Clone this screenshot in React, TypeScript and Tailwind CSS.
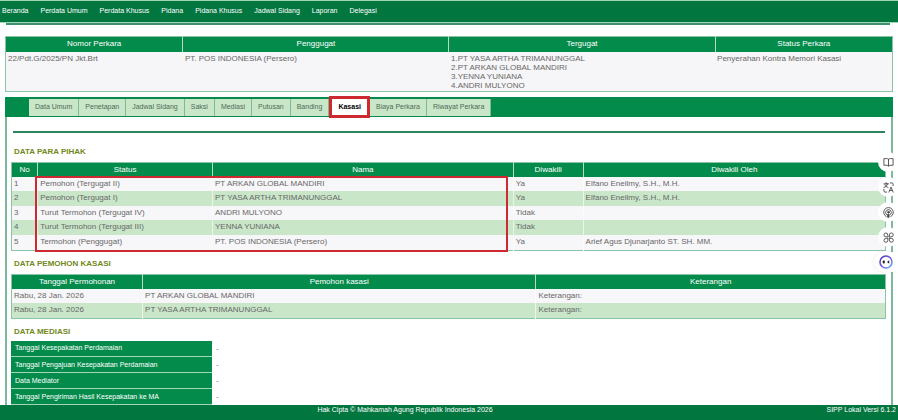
import React from "react";

const menus = [
  "Beranda",
  "Perdata Umum",
  "Perdata Khusus",
  "Pidana",
  "Pidana Khusus",
  "Jadwal Sidang",
  "Laporan",
  "Delegasi",
];

const tabs = [
  "Data Umum",
  "Penetapan",
  "Jadwal Sidang",
  "Saksi",
  "Mediasi",
  "Putusan",
  "Banding",
  "Kasasi",
  "Biaya Perkara",
  "Riwayat Perkara",
];

const tergugat = [
  "1.PT YASA ARTHA TRIMANUNGGAL",
  "2.PT ARKAN GLOBAL MANDIRI",
  "3.YENNA YUNIANA",
  "4.ANDRI MULYONO",
];

const pihak = [
  { no: 1, status: "Pemohon (Tergugat II)", nama: "PT ARKAN GLOBAL MANDIRI", diwakili: "Ya", oleh: "Elfano Eneilmy, S.H., M.H." },
  { no: 2, status: "Pemohon (Tergugat I)", nama: "PT YASA ARTHA TRIMANUNGGAL", diwakili: "Ya", oleh: "Elfano Eneilmy, S.H., M.H." },
  { no: 3, status: "Turut Termohon (Tergugat IV)", nama: "ANDRI MULYONO", diwakili: "Tidak", oleh: "" },
  { no: 4, status: "Turut Termohon (Tergugat III)", nama: "YENNA YUNIANA", diwakili: "Tidak", oleh: "" },
  { no: 5, status: "Termohon (Penggugat)", nama: "PT. POS INDONESIA (Persero)", diwakili: "Ya", oleh: "Arief Agus Djunarjanto ST. SH. MM." },
];

const pemohon = [
  { tanggal: "Rabu, 28 Jan. 2026", nama: "PT ARKAN GLOBAL MANDIRI" },
  { tanggal: "Rabu, 28 Jan. 2026", nama: "PT YASA ARTHA TRIMANUNGGAL" },
];

const mediasi = [
  "Tanggal Kesepakatan Perdamaian",
  "Tanggal Pengajuan Kesepakatan Perdamaian",
  "Data Mediator",
  "Tanggal Pengiriman Hasil Kesepakatan ke MA",
];

const Th = ({ children, className = "" }: { children: React.ReactNode; className?: string }) => (
  <th
    scope="col"
    className={`border-l border-[#b5dcc4] first:border-l-0 bg-[#038b4b] p-0 font-normal text-white ${className}`}
  >
    {children}
  </th>
);

const Td = ({ children }: { children?: React.ReactNode }) => (
  <td className="border-l border-white/60 first:border-l-0 px-[2px] py-0 align-top">{children}</td>
);

const Title = ({ children }: { children: React.ReactNode }) => (
  <h2 className="px-[3px] text-[8px] leading-[10px] font-bold text-[#71891a]">{children}</h2>
);

const iconProps = {
  viewBox: "0 0 24 24",
  fill: "none",
  stroke: "#4a4a4a",
  strokeWidth: 2,
  strokeLinecap: "round" as const,
  strokeLinejoin: "round" as const,
  className: "h-[11px] w-[11px]",
};

const tools = [
  {
    label: "Baca",
    icon: (
      <svg {...iconProps}>
        <path d="M12 5v15M12 5c-1-1-2-1.5-4-1.5H2V18h6.5c1.5 0 2.5.5 3.5 2 1-1.5 2-2 3.5-2H22V3.5h-6c-2 0-3 .5-4 1.5z" />
      </svg>
    ),
  },
  {
    label: "Terjemahkan",
    icon: (
      <svg {...iconProps}>
        <path d="M2 4h10M7 1.5V4M10 4c-1 4-4 7-8 8M4 6c1 3 4 5 7 6" />
        <path d="M13 22l4.5-11L22 22M14.5 18.500h6" />
        <path d="M16 2h3.5c1.5 0 2.5 1 2.5 2.5V8M2 16v3.5C2 21 3 22 4.5 22H8" />
      </svg>
    ),
  },
  {
    label: "Dengarkan",
    icon: (
      <svg {...iconProps}>
        <path d="M7 21a10.500 10.500 0 1 1 10 0" />
        <path d="M7.500 16.500a6.300 6.300 0 1 1 9 0" />
        <circle cx="12" cy="11.5" r="2" fill="#4a4a4a" />
        <path d="M10.500 16.500h3l-.5 6h-2z" fill="#4a4a4a" />
      </svg>
    ),
  },
  {
    label: "Aplikasi",
    icon: (
      <svg {...iconProps}>
        <path d="M10.500 10.500H6.300a4.200 4.200 0 1 1 4.200-4.200z" />
        <path d="M14 10.500V6.300a4.200 4.200 0 1 1 4.200 4.200z" />
        <path d="M10.500 14v4.200a4.200 4.200 0 1 1-4.200-4.200z" />
        <path d="M14 14h4.200a4.200 4.200 0 1 1-4.200 4.200z" />
      </svg>
    ),
  },
];

const SideTools = () => (
  <div className="absolute top-[152px] right-0 flex flex-col items-end gap-[5px]">
    {tools.map((tool) => (
      <button
        key={tool.label}
        type="button"
        aria-label={tool.label}
        className="flex h-5 w-5 items-center justify-center rounded-full bg-white"
      >
        {tool.icon}
      </button>
    ))}
    <button
      type="button"
      aria-label="Asisten"
      className="flex h-5 w-6 items-center justify-center rounded-l-full bg-white shadow-[-1px_0_4px_rgba(0,0,0,0.06)]"
    >
      <svg viewBox="0 0 28 28" className="h-[14px] w-[14px]">
        <defs>
          <linearGradient id="ring" x1="0" y1="0" x2="1" y2="1">
            <stop offset="0" stopColor="#4a35b8" />
            <stop offset="0.5" stopColor="#7a58e6" />
            <stop offset="1" stopColor="#58b8f0" />
          </linearGradient>
        </defs>
        <circle cx="14" cy="14" r="12" fill="#fff" stroke="url(#ring)" strokeWidth="3.2" />
        <rect x="7.5" y="11" width="4" height="6" rx="1.5" fill="#222" />
        <path d="M20.5 10.5L16 14l4.5 3.5z" fill="#222" />
      </svg>
    </button>
  </div>
);

const App = () => {
  return (
    <div className="relative flex min-h-screen flex-col bg-white font-['Liberation_Sans',Arial,sans-serif] text-[8px] leading-[14px] text-[#686868]">
      <nav className="flex h-[23px] items-center gap-3 border-y border-[#9fd6b8] bg-[#02763f] px-[2px] pb-[2px] text-[7px] text-white">
        {menus.map((menu) => (
          <a key={menu} href="#" className="whitespace-nowrap">
            {menu}
          </a>
        ))}
      </nav>

      <main className="flex flex-1 flex-col px-[5px]">
        <hr className="mr-[3px] ml-px border-t-2 border-[#3f8f6c]" />

        <table className="mt-[11px] w-full table-fixed border-collapse border border-[#8cc4a8]">
          <thead>
            <tr className="h-[15px]">
              <Th className="w-[20%]">Nomor Perkara</Th>
              <Th className="w-[30%]">Penggugat</Th>
              <Th className="w-[30%]">Tergugat</Th>
              <Th className="w-[20%]">Status Perkara</Th>
            </tr>
          </thead>
          <tbody>
            <tr className="bg-[#f6f5f7] leading-[9px]">
              <td className="px-[2px] pt-[2px] pb-px align-top">22/Pdt.G/2025/PN Jkt.Brt</td>
              <td className="px-[2px] pt-[2px] pb-px align-top">PT. POS INDONESIA (Persero)</td>
              <td className="px-[2px] pt-[2px] pb-px align-top">
                {tergugat.map((nama) => (
                  <div key={nama}>{nama}</div>
                ))}
              </td>
              <td className="px-[2px] pt-[2px] pb-px align-top">Penyerahan Kontra Memori Kasasi</td>
            </tr>
          </tbody>
        </table>

        <div className="mt-[5px] flex h-5 bg-[#038b4b] pt-[2px] pb-px pl-6 text-[7px]">
          {tabs.map((tab) =>
            tab === "Kasasi" ? (
              <button
                key={tab}
                type="button"
                className="z-10 -mt-[3px] -mb-[2px] border-[3px] border-[#cc2a30] bg-white px-[6px] font-bold text-black"
              >
                {tab}
              </button>
            ) : (
              <button
                key={tab}
                type="button"
                className="border-r border-[#7dbb90] bg-[#c9e6c9] px-[6px] whitespace-nowrap text-[#4e6b55]"
              >
                {tab}
              </button>
            )
          )}
        </div>

        <section className="flex-1 border-x-2 border-[#7dba9d] pr-[5px] pl-[4px]">
          <hr className="mt-[14px] mr-px ml-[2px] border-t-2 border-[#2c8560]" />

          <div className="mt-[14px]">
            <Title>DATA PARA PIHAK</Title>
          </div>
          <div className="relative mt-[5px]">
            <table className="h-[89px] w-full table-fixed border-collapse border border-[#8cc4a8]">
              <thead>
                <tr>
                  <Th className="w-[3%]">No</Th>
                  <Th className="w-[20%]">Status</Th>
                  <Th>Nama</Th>
                  <Th className="w-[8%]">Diwakili</Th>
                  <Th className="w-[34.6%]">Diwakili Oleh</Th>
                </tr>
              </thead>
              <tbody>
                {pihak.map((item) => (
                  <tr key={item.no} className="odd:bg-[#f7f6f8] even:bg-[#c9e6c9]">
                    <Td>{item.no}</Td>
                    <Td>{item.status}</Td>
                    <Td>{item.nama}</Td>
                    <Td>{item.diwakili}</Td>
                    <Td>{item.oleh}</Td>
                  </tr>
                ))}
              </tbody>
            </table>
            {/* highlight over the status and name columns */}
            <div className="pointer-events-none absolute top-[14px] -bottom-px left-6 w-[54%] border-2 border-[#cc2a30]" />
          </div>

          <div className="mt-[8px]">
            <Title>DATA PEMOHON KASASI</Title>
          </div>
          <table className="mt-[5px] h-[45px] w-full table-fixed border-collapse border border-[#8cc4a8]">
            <thead>
              <tr>
                <Th className="w-[15%]">Tanggal Permohonan</Th>
                <Th className="w-[45%]">Pemohon kasasi</Th>
                <Th className="w-[40%]">Keterangan</Th>
              </tr>
            </thead>
            <tbody>
              {pemohon.map((item) => (
                <tr key={item.nama} className="odd:bg-[#f7f6f8] even:bg-[#c9e6c9]">
                  <Td>{item.tanggal}</Td>
                  <Td>{item.nama}</Td>
                  <Td>Keterangan:</Td>
                </tr>
              ))}
            </tbody>
          </table>

          <div className="mt-[8px]">
            <Title>DATA MEDIASI</Title>
          </div>
          <table className="mt-[4px] w-full table-fixed border-collapse text-[7px]">
            <tbody>
              {mediasi.map((label) => (
                <tr key={label} className="h-4">
                  <th
                    scope="row"
                    className="w-[23%] border-b border-[#a5d5b8] bg-[#038b4b] px-1 py-0 text-left font-normal text-white"
                  >
                    {label}
                  </th>
                  <td className="px-1 py-0">-</td>
                </tr>
              ))}
            </tbody>
          </table>
        </section>
      </main>

      <footer className="grid h-[15px] grid-cols-[1fr_auto_1fr] bg-[#02763f] px-[2px] text-[7px] leading-[10px] text-white">
        <span className="col-start-2 pr-[88px]">Hak Cipta © Mahkamah Agung Republik Indonesia 2026</span>
        <span className="text-right">SIPP Lokal Versi 6.1.2</span>
      </footer>

      <SideTools />
    </div>
  );
};

export default App;
